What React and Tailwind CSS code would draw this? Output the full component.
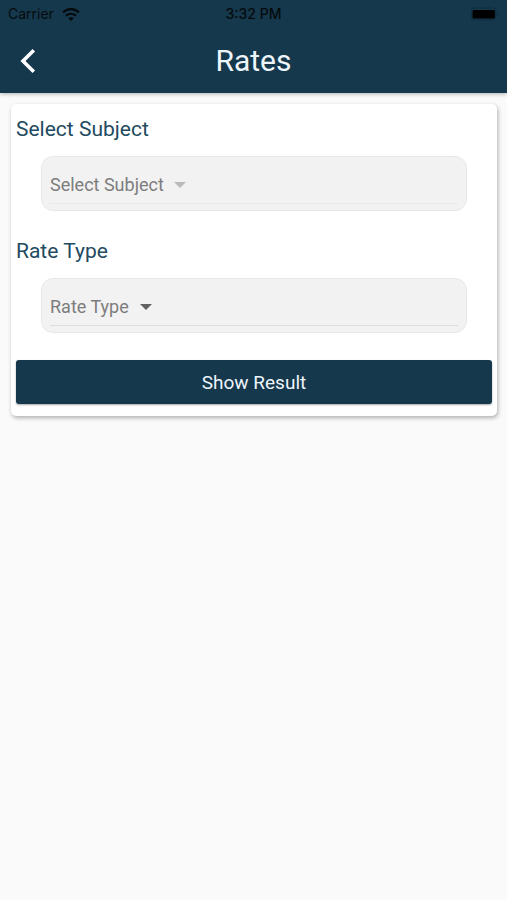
import { useState } from 'react'

function StatusBar() {
  return (
    <div className="grid grid-cols-3 items-center h-7 px-2 font-['Inter',sans-serif] text-sm text-[#050a0d]">
      <div className="flex items-center gap-2">
        <span>Carrier</span>
        <svg width="18" height="13" viewBox="0 0 18 13" fill="none" stroke="currentColor" strokeWidth="2.4">
          <path d="M1 4.300C5.600 0 12.400 0 17 4.300" />
          <path d="M4 7.700c2.900-2.500 7.100-2.500 10 0" />
          <path d="M9 13 6.200 10.200c1.600-1.400 4-1.400 5.600 0Z" fill="currentColor" stroke="none" />
        </svg>
      </div>
      <span className="text-center font-medium">3:32 PM</span>
      <svg className="justify-self-end" width="28" height="14" viewBox="0 0 28 14">
        <rect x="0.500" y="1" width="24.500" height="12" rx="3" fill="none" stroke="#0e2c3d" />
        <rect x="1.500" y="3" width="22.500" height="8.500" rx="1.500" fill="#000" />
        <path d="M26.500 5v4c1.500-.6 1.500-3.400 0-4Z" fill="#0e2c3d" />
      </svg>
    </div>
  )
}

function SelectField({ id, label, disabled }) {
  const [value, setValue] = useState('')

  return (
    <div className="mb-[27px]">
      <label htmlFor={id} className="block text-[21px] leading-[26px] text-[#234a60]">
        {label}
      </label>
      <div className="mt-3.5 mx-[25px] h-[55px] px-2 pt-2.5 pb-1.5 rounded-xl bg-[#f2f2f2] border border-[#e8e8e8]">
        <div className={`flex items-center gap-2.5 h-full border-b ${disabled ? 'border-[#eaeaea]' : 'border-[#dedede]'}`}>
          <select
            id={id}
            value={value}
            disabled={disabled}
            onChange={(e) => setValue(e.target.value)}
            className="appearance-none bg-transparent text-lg leading-6 text-[#7d7d7d] opacity-100 outline-none"
          >
            <option value="">{label}</option>
          </select>
          <svg
            width="12" height="6" viewBox="0 0 12 6"
            className={`pointer-events-none ${disabled ? 'text-[#bbbbbb]' : 'text-[#616161]'}`}
          >
            <path d="M0 0h12L6 6Z" fill="currentColor" />
          </svg>
        </div>
      </div>
    </div>
  )
}

export default function App() {
  return (
    <div className="min-h-screen bg-[#fafafa] font-['Roboto',sans-serif]">
      <header className="relative bg-[#15384c] shadow-[0_1px_4px_rgba(0,0,0,0.3)]">
        <StatusBar />
        <div className="grid grid-cols-[56px_1fr_56px] items-center h-[65px]">
          <button type="button" aria-label="Back" className="flex items-center justify-center h-12 cursor-pointer">
            <svg width="16" height="24" viewBox="0 0 16 24" fill="none" stroke="#fff" strokeWidth="3.600">
              <path d="M13.800 1.300 3 12l10.800 10.700" />
            </svg>
          </button>
          <h1 className="text-center text-3xl text-[#eef5fa]">Rates</h1>
        </div>
      </header>

      <main className="pt-[11px] pl-[11px] pr-2.5">
        <form
          onSubmit={(e) => e.preventDefault()}
          className="px-[5px] py-3 bg-white rounded-[5px] shadow-[1px_2px_4px_rgba(0,0,0,0.3)]"
        >
          <SelectField id="subject" label="Select Subject" disabled />
          <SelectField id="rate-type" label="Rate Type" />
          <button
            type="submit"
            className="block w-full h-11 pt-0.5 rounded-[3px] bg-[#15384c] text-[19px] text-[#eef5fa] shadow-[0_1px_2px_rgba(0,0,0,0.35)] cursor-pointer"
          >
            Show Result
          </button>
        </form>
      </main>
    </div>
  )
}
